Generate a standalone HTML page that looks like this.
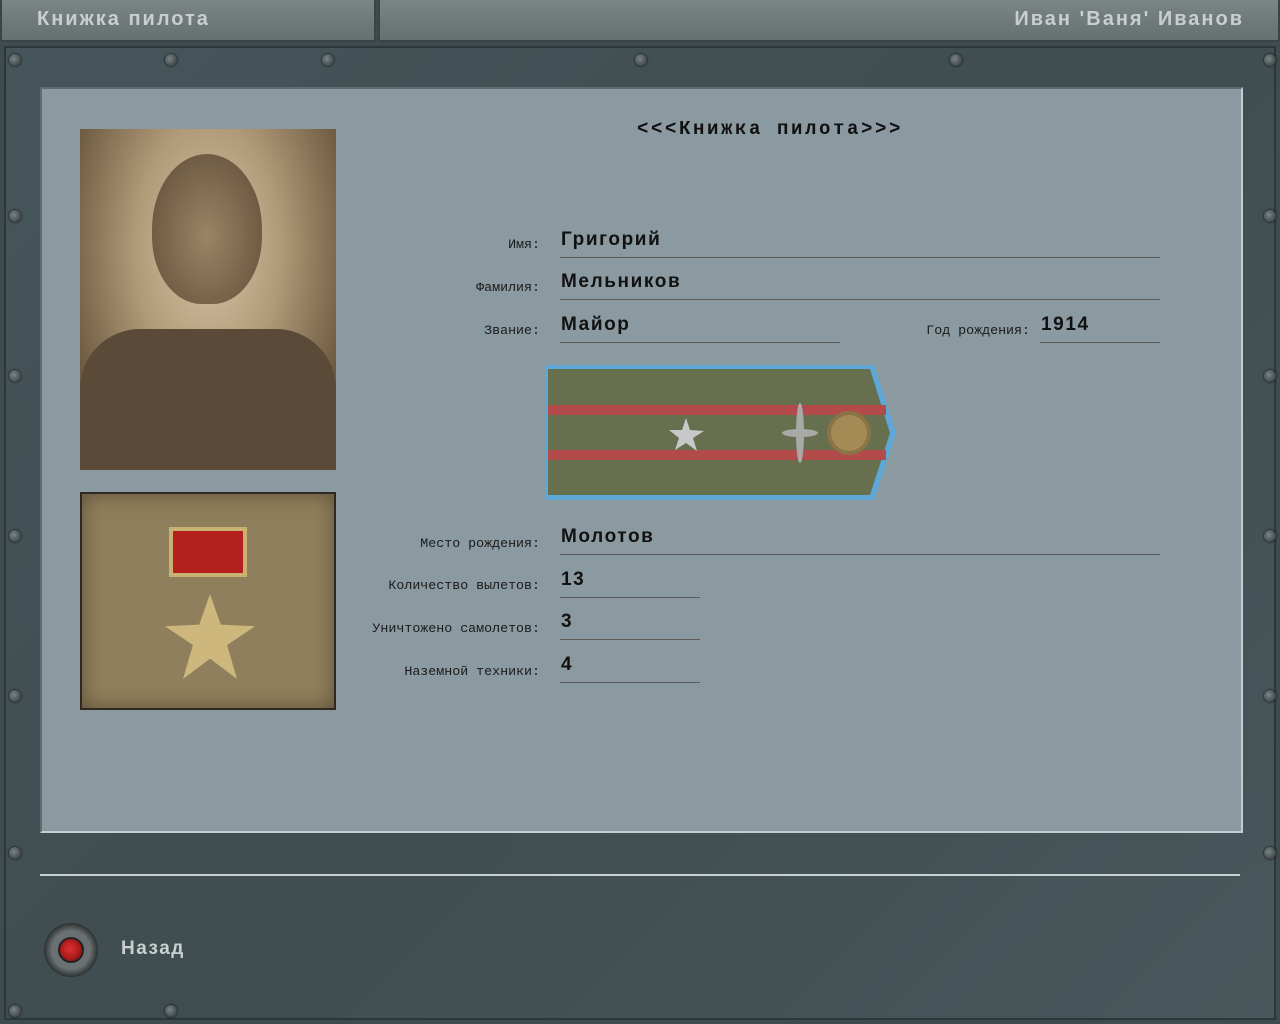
<!DOCTYPE html>
<html><head><meta charset="utf-8"><style>
*{margin:0;padding:0;box-sizing:border-box}
body{width:1280px;height:1024px;background:#3e4c4f;position:relative;overflow:hidden;font-family:"Liberation Sans","DejaVu Sans",sans-serif}
.a{position:absolute}
.bar{top:0;height:42px;background:linear-gradient(#7a8584,#66706f);border:2px solid #3a4444;border-top:0}
.bt{font-weight:bold;color:#c9cfcf;font-size:20px;letter-spacing:2px}
.frame{left:4px;top:46px;width:1272px;height:974px;border:2px solid #2c3739;background:linear-gradient(135deg,#46555a,#3f4d50 50%,#48575b)}
.panel{left:40px;top:87px;width:1203px;height:746px;background:#8a9aa0;border:2px solid #c4cdd0;border-top-color:#5e6c70;border-left-color:#5e6c70}
.lbl{font-family:"Liberation Mono",monospace;font-size:13.3px;color:#1a1a1a;text-align:right;width:200px}
.val{font-weight:bold;font-size:19px;color:#111;letter-spacing:1.6px}
.ln{height:1px;background:#5f5a55}
.screw{width:12px;height:12px;border-radius:50%;background:radial-gradient(circle at 40% 40%,#7a8486,#2a3132);box-shadow:0 0 2px #000}
</style></head><body>
<div class="a bar" style="left:0;width:376px"></div>
<div class="a bar" style="left:378px;width:902px"></div>
<div class="a bt" style="left:37px;top:8px">Книжка пилота</div>
<div class="a bt" style="right:36px;top:8px">Иван 'Ваня' Иванов</div>
<div class="a frame"></div>
<div class="a screw" style="left:9px;top:54px"></div><div class="a screw" style="left:165px;top:54px"></div><div class="a screw" style="left:322px;top:54px"></div><div class="a screw" style="left:635px;top:54px"></div><div class="a screw" style="left:950px;top:54px"></div><div class="a screw" style="left:1264px;top:54px"></div>
<div class="a screw" style="left:9px;top:210px"></div><div class="a screw" style="left:9px;top:370px"></div><div class="a screw" style="left:9px;top:530px"></div><div class="a screw" style="left:9px;top:690px"></div><div class="a screw" style="left:9px;top:847px"></div><div class="a screw" style="left:9px;top:1005px"></div>
<div class="a screw" style="left:1264px;top:210px"></div><div class="a screw" style="left:1264px;top:370px"></div><div class="a screw" style="left:1264px;top:530px"></div><div class="a screw" style="left:1264px;top:690px"></div><div class="a screw" style="left:1264px;top:847px"></div>
<div class="a screw" style="left:165px;top:1005px"></div>
<div class="a panel"></div>
<div class="a" style="left:80px;top:129px;width:256px;height:341px;background:radial-gradient(ellipse at 50% 35%,#d7c6a8 0%,#b09a78 40%,#6e5a42 80%);overflow:hidden">
 <div class="a" style="left:72px;top:25px;width:110px;height:150px;border-radius:50% 50% 45% 45%;background:radial-gradient(ellipse at 50% 55%,#9b8466,#5e4a36)"></div>
 <div class="a" style="left:0;top:200px;width:256px;height:141px;background:#5b4a38;border-radius:60px 60px 0 0"></div>
</div>
<div class="a" style="left:80px;top:492px;width:256px;height:218px;background:#8f7f5c;border:2px solid #2e2a22;box-shadow:inset 0 0 20px #5d5038">
 <div class="a" style="left:87px;top:33px;width:78px;height:50px;background:#b4201e;border:4px solid #c7b072"></div>
 <div class="a" style="left:83px;top:100px;width:90px;height:85px;background:#cdb77c;clip-path:polygon(50% 0,62% 36%,100% 38%,69% 60%,80% 100%,50% 76%,20% 100%,31% 60%,0 38%,38% 36%)"></div>
</div>
<div class="a" style="left:637px;top:118px;font-family:'Liberation Mono',monospace;font-weight:bold;font-size:19px;letter-spacing:2.6px;color:#111;white-space:nowrap">&lt;&lt;&lt;Книжка пилота&gt;&gt;&gt;</div>
<div class="a lbl" style="left:340px;top:237px">Имя:</div><div class="a val" style="left:561px;top:229px">Григорий</div><div class="a ln" style="left:560px;top:257px;width:600px"></div>
<div class="a lbl" style="left:340px;top:280px">Фамилия:</div><div class="a val" style="left:561px;top:271px">Мельников</div><div class="a ln" style="left:560px;top:299px;width:600px"></div>
<div class="a lbl" style="left:340px;top:323px">Звание:</div><div class="a val" style="left:561px;top:314px">Майор</div><div class="a ln" style="left:560px;top:342px;width:280px"></div>
<div class="a lbl" style="left:830px;top:323px">Год рождения:</div><div class="a val" style="left:1041px;top:314px">1914</div><div class="a ln" style="left:1040px;top:342px;width:120px"></div>
<svg class="a" style="left:544px;top:363px" width="356" height="140"><path d="M2 2H330L352 70L330 137H2Z" fill="#5da8d8"/><path d="M4 6H326L346 70L326 132H4Z" fill="#67704e"/><rect x="4" y="42" width="338" height="10" fill="#b44b4b"/><rect x="4" y="87" width="338" height="10" fill="#b44b4b"/><path d="M142 55l4 12 14 1-11 7 4 13-11-8-11 7 4-12-10-8 13 0z" fill="#c8c8c8"/><ellipse cx="256" cy="70" rx="4" ry="30" fill="#a9aaa8"/><ellipse cx="256" cy="70" rx="18" ry="4" fill="#a9aaa8"/><circle cx="305" cy="70" r="22" fill="#8a7446"/><circle cx="305" cy="70" r="18" fill="#a48a55"/></svg>
<div class="a lbl" style="left:340px;top:536px">Место рождения:</div><div class="a val" style="left:561px;top:526px">Молотов</div><div class="a ln" style="left:560px;top:554px;width:600px"></div>
<div class="a lbl" style="left:340px;top:578px">Количество вылетов:</div><div class="a val" style="left:561px;top:569px">13</div><div class="a ln" style="left:560px;top:597px;width:140px"></div>
<div class="a lbl" style="left:340px;top:621px">Уничтожено самолетов:</div><div class="a val" style="left:561px;top:611px">3</div><div class="a ln" style="left:560px;top:639px;width:140px"></div>
<div class="a lbl" style="left:340px;top:664px">Наземной техники:</div><div class="a val" style="left:561px;top:654px">4</div><div class="a ln" style="left:560px;top:682px;width:140px"></div>
<div class="a" style="left:40px;top:874px;width:1200px;height:2px;background:#c8d0d2"></div>
<div class="a" style="left:44px;top:923px;width:54px;height:54px;border-radius:50%;background:radial-gradient(circle,#6b7172 50%,#2e3334 70%)"></div>
<div class="a" style="left:58px;top:937px;width:26px;height:26px;border-radius:50%;background:radial-gradient(circle at 45% 45%,#e03030,#7a0a0a);border:2px solid #222"></div>
<div class="a" style="left:121px;top:938px;font-weight:bold;font-size:19px;color:#c9cfcf;letter-spacing:1.5px">Назад</div>
</body></html>
